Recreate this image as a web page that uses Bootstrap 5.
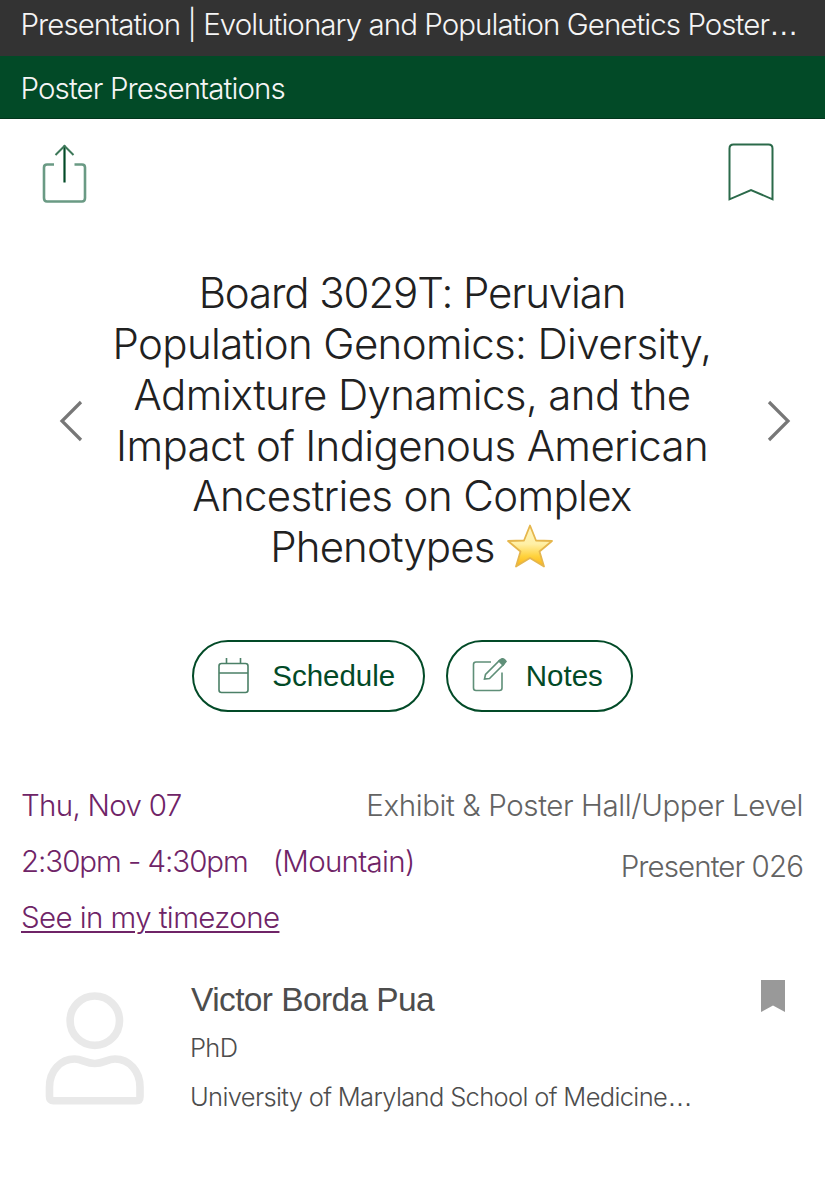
<!DOCTYPE html>
<html lang="en">
<head>
<meta charset="utf-8">
<meta name="viewport" content="width=device-width, initial-scale=1">
<title>Poster Presentations</title>
<link href="https://cdn.jsdelivr.net/npm/bootstrap@5.3.0/dist/css/bootstrap.min.css" rel="stylesheet">
<style>
body{font-family:Inter,"Liberation Sans",sans-serif;font-weight:300;color:#212121;font-size:29.5px;line-height:36px}
.topbar{background:#333;height:56px;padding:6px 22px 0 20.5px;color:#f5f5f5;letter-spacing:-.95px}
.trackbar{background:#024a27;height:63px;padding:14px 20.5px 0;color:#f5f5f5;border-bottom:1px solid #02351c;letter-spacing:-.88px}
.dots{font-family:"Liberation Sans",sans-serif;letter-spacing:0}
.tools{height:150px;padding:23px 50px 0 41px}
.talk-title{font-size:42px;line-height:50.8px;font-weight:300;letter-spacing:-.62px;white-space:nowrap;margin:0 26px 1px 0}
.title-tight{letter-spacing:-1.1px}
.title-end{letter-spacing:-.9px}
.title-row{padding:0 33px 0 58px;height:304px}
.star{width:48px;height:46px;vertical-align:-8px}
.pill{height:72px;border:2px solid #024a27;border-radius:36px;color:#024a27;font:400 29.5px/36px "Liberation Sans",sans-serif;padding:0 28px 0 24px}
.actions{margin-top:67px;gap:21px}
.pill-schedule{gap:22px}
.pill-notes{gap:17.5px}
.when{width:320px;color:#6f2467;letter-spacing:-.7px;line-height:56.2px;padding-top:3px}
.hours{letter-spacing:-1.05px;margin-right:25px}
.when a{color:inherit;letter-spacing:-.6px;text-decoration-thickness:2px;text-underline-offset:3px}
.where{color:#636363;letter-spacing:-.4px;line-height:61px;padding-top:1px}
.presenter-no{letter-spacing:-.9px}
.info{margin-top:62px;padding:0 22px 0 21px}
.speaker{padding:0 40px 0 44px;margin-top:34px;color:#4d4d4d}
.avatar{margin-top:10px}
.speaker-text{margin-left:44px}
.speaker-name{font:400 33.5px/40px "Liberation Sans",sans-serif;letter-spacing:-.6px;padding:0 0 3px 1px}
.detail{font-size:25.5px;line-height:49.4px;letter-spacing:-.66px}
</style>
</head>
<body>
<header>
<div class="topbar text-nowrap">Presentation | Evolutionary and Population Genetics Poster<span class="dots">…</span></div>
<div class="trackbar text-nowrap">Poster Presentations</div>
</header>
<main>
<div class="tools d-flex justify-content-between align-items-start">
<svg width="48" height="64" viewBox="0 0 48 64" fill="none" stroke="#024a27"><path d="M13 22.500H6Q3 22.500 3 25.500V56Q3 59.500 6 59.500H41Q44 59.500 44 56V25.500Q44 22.500 41 22.500H33.500" stroke="#6a9a84" stroke-width="2.600"/><path d="M23.500 3.500V40.500" stroke-width="2.200"/><path d="M14.500 13L23.500 4L32.500 13" stroke="#3d7859" stroke-width="2"/></svg>
<svg width="48" height="60" viewBox="0 0 48 60" fill="none" stroke="#2b6a4a" stroke-width="2"><path d="M2.500 57.300V6.500Q2.500 2.500 6.500 2.500H41.500Q45.500 2.500 45.500 6.500V57.300L24 48Z"/></svg>
</div>
<div class="title-row d-flex justify-content-between align-items-center">
<svg width="26" height="42" viewBox="0 0 26 42" fill="none" stroke="#777" stroke-width="3.200"><path d="M23 2L4 21L23 40"/></svg>
<h1 class="talk-title text-center"><span class="title-tight">Board 3029T: Peruvian</span><br>Population Genomics: Diversity,<br>Admixture Dynamics, and the<br>Impact of Indigenous American<br>Ancestries on Complex<br><span class="title-end">Phenotypes</span> <svg class="star" viewBox="0 0 48 46"><defs><linearGradient id="gold" x1="0" y1="0" x2="0" y2="1"><stop offset="0" stop-color="#fff3bd"/><stop offset=".45" stop-color="#fff0a6"/><stop offset=".75" stop-color="#ffd23c"/><stop offset="1" stop-color="#fbb316"/></linearGradient></defs><path d="M24 1.500L30 16.500L46 17L33.500 27.500L38 42.500L24 34L10 42.500L14.500 27.500L2 17L18 16.500Z" fill="url(#gold)" stroke="#e5b64c" stroke-width="1.800" stroke-linejoin="round"/></svg></h1>
<svg width="26" height="42" viewBox="0 0 26 42" fill="none" stroke="#777" stroke-width="3.200"><path d="M3 2L22 21L3 40"/></svg>
</div>
<div class="actions d-flex justify-content-center">
<button class="pill pill-schedule bg-white d-flex align-items-center"><svg width="32" height="36" viewBox="0.500 0 32 36" fill="none" stroke="#4b8067" stroke-width="1.600"><rect x="1.500" y="5.500" width="29" height="29" rx="2.500"/><path d="M1.500 15H30.500M9 0V5.500M23 0V5.500"/></svg><span>Schedule</span></button>
<button class="pill pill-notes bg-white d-flex align-items-center"><svg width="36" height="36" viewBox="0 1.500 36 36" fill="none" stroke="#5f8f78" stroke-width="1.600"><path d="M19 5.500H4Q1.500 5.500 1.500 8V31.500Q1.500 34 4 34H27.500Q30 34 30 31.500V16"/><path d="M12.500 22.500L13.500 18L27.500 4L31.500 8L17.500 22Z"/><path d="M27 4.500L29.500 2.500Q32 1.500 34 5L31 8.500Z" fill="#5f8f78"/></svg><span>Notes</span></button>
</div>
<section class="info d-flex justify-content-between text-nowrap">
<div class="when"><div>Thu, Nov 07</div><div class="d-flex"><span class="hours">2:30pm - 4:30pm</span><span>(Mountain)</span></div><div><a href="#">See in my timezone</a></div></div>
<div class="where text-end"><div>Exhibit &amp; Poster Hall/Upper Level</div><div class="presenter-no">Presenter 026</div></div>
</section>
<section class="speaker d-flex align-items-start text-nowrap">
<svg class="avatar" width="102" height="118" viewBox="0.500 0 102 118" fill="none" stroke="#e9e9e9" stroke-width="7.600"><circle cx="51.300" cy="30.700" r="24.700"/><path d="M10 110.800Q6 110.800 6 106.500V97C6 81 17 69 31 69C39 69 42 73.500 51.300 73.500C60.500 73.500 63.500 69 71.500 69C85.500 69 96.500 81 96.500 97V106.500Q96.500 110.800 92.500 110.800Z"/></svg>
<div class="speaker-text"><div class="speaker-name">Victor Borda Pua</div><div class="detail">PhD</div><div class="detail">University of Maryland School of Medicine<span class="dots">…</span></div></div>
<svg class="ms-auto" width="24" height="32" viewBox="0 0 24 32"><path d="M0 0H24V32L12 25.500L0 32Z" fill="#999"/></svg>
</section>
</main>
<script src="https://cdn.jsdelivr.net/npm/bootstrap@5.3.0/dist/js/bootstrap.bundle.min.js"></script>
</body>
</html>
